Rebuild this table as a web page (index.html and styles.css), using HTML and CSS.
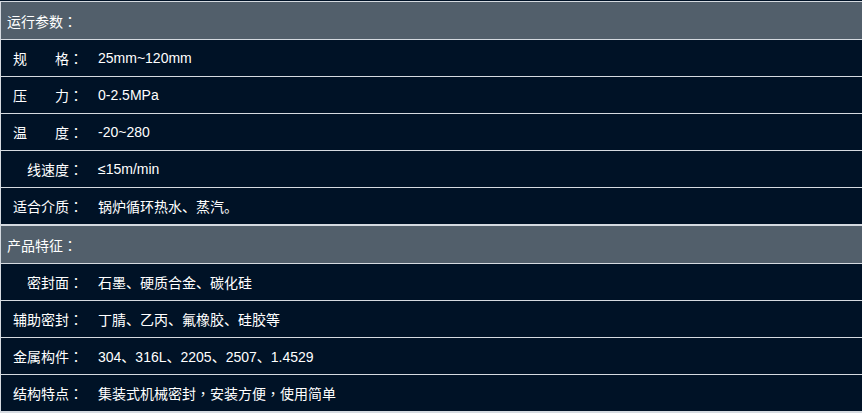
FILE: index.html
```html
<!DOCTYPE html>
<html lang="zh">
<head>
<meta charset="utf-8">
<title>参数</title>
<link rel="stylesheet" href="styles.css">
</head>
<body>
<div class="table">
  <div class="head">运行参数<span class="punct">：</span></div>
  <div class="row"><span class="label">规　　格<span class="punct">：</span></span><span class="value">25mm~120mm</span></div>
  <div class="row"><span class="label">压　　力<span class="punct">：</span></span><span class="value">0-2.5MPa</span></div>
  <div class="row"><span class="label">温　　度<span class="punct">：</span></span><span class="value">-20~280</span></div>
  <div class="row"><span class="label">线速度<span class="punct">：</span></span><span class="value">≤15m/min</span></div>
  <div class="row"><span class="label">适合介质<span class="punct">：</span></span><span class="value">锅炉循环热水、蒸汽。</span></div>
  <div class="head head-split">产品特征<span class="punct">：</span></div>
  <div class="row"><span class="label">密封面<span class="punct">：</span></span><span class="value">石墨、硬质合金、碳化硅</span></div>
  <div class="row"><span class="label">辅助密封<span class="punct">：</span></span><span class="value">丁腈、乙丙、氟橡胶、硅胶等</span></div>
  <div class="row"><span class="label">金属构件<span class="punct">：</span></span><span class="value">304、316L、2205、2507、1.4529</span></div>
  <div class="row"><span class="label">结构特点<span class="punct">：</span></span><span class="value">集装式机械密封<span class="punct">，</span>安装方便<span class="punct">，</span>使用简单</span></div>
</div>
</body>
</html>
```

FILE: styles.css
```css
html, body {
  margin: 0;
  padding: 0;
  background: #001226;
  overflow: hidden;
}

.table {
  margin-top: 1px;
  width: 900px;
  display: flex;
  flex-direction: column;
  gap: 1px;
  padding: 1px 0 2px 1px;
  background: #d5dae0;
  font-family: "Liberation Sans", "Noto Sans CJK SC", sans-serif;
  font-size: 14px;
  color: #ffffff;
}

.punct {
  font-family: "Noto Sans CJK TC", sans-serif;
  font-feature-settings: "locl" 0;
}

.head {
  height: 37px;
  display: flex;
  align-items: center;
  padding-left: 6px;
  background: #525f6b;
}

.head-split {
  border-top: 1px solid #d5dae0;
}

.row {
  height: 36px;
  display: flex;
  align-items: center;
  background: #001226;
}

.label {
  width: 82px;
  text-align: right;
  flex: none;
}

.value {
  padding-left: 15px;
}
```
